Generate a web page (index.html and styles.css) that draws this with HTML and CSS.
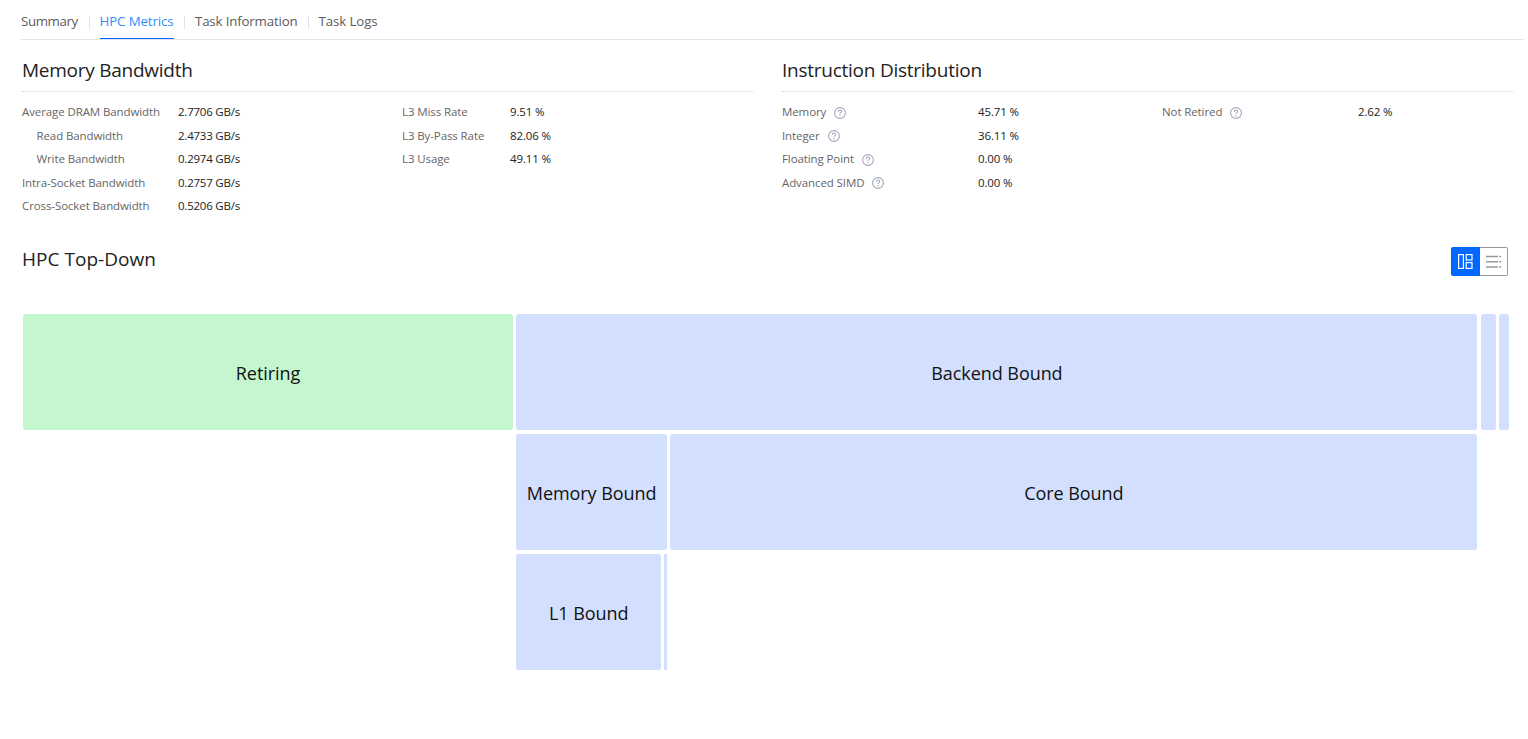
FILE: index.html
```html
<!DOCTYPE html>
<html lang="en">
<head>
<meta charset="utf-8">
<title>HPC Metrics</title>
<link rel="stylesheet" href="styles.css">
</head>
<body>
<svg class="defs" width="0" height="0" aria-hidden="true">
  <symbol id="help" viewBox="0 0 12 12">
    <circle cx="6" cy="6" r="5.4" fill="none" stroke="#a4a8bb" stroke-width="1.1"/>
    <path d="M4.3 4.8C4.3 3.6 5 3 6 3s1.7.6 1.7 1.5C7.7 5.600 6 5.700 6 7.100" fill="none" stroke="#a4a8bb" stroke-width="1.1"/>
    <path d="M5.400 8h1.200v1.200H5.400z" fill="#a4a8bb"/>
  </symbol>
</svg>
<nav class="tabs">
  <a class="tab t1">Summary</a>
  <a class="tab t2 active">HPC Metrics</a>
  <a class="tab t3">Task Information</a>
  <a class="tab t4">Task Logs</a>
</nav>
<main>
  <div class="panels">
    <section class="panel">
      <h2>Memory Bandwidth</h2>
      <div class="metrics">
        <dl class="bandwidth">
          <dt>Average DRAM Bandwidth</dt><dd>2.7706 GB/s</dd>
          <dt class="sub">Read Bandwidth</dt><dd>2.4733 GB/s</dd>
          <dt class="sub">Write Bandwidth</dt><dd>0.2974 GB/s</dd>
          <dt>Intra-Socket Bandwidth</dt><dd>0.2757 GB/s</dd>
          <dt>Cross-Socket Bandwidth</dt><dd>0.5206 GB/s</dd>
        </dl>
        <dl class="cache">
          <dt>L3 Miss Rate</dt><dd>9.51 %</dd>
          <dt>L3 By-Pass Rate</dt><dd>82.06 %</dd>
          <dt>L3 Usage</dt><dd>49.11 %</dd>
        </dl>
      </div>
    </section>
    <section class="panel">
      <h2>Instruction Distribution</h2>
      <div class="metrics">
        <dl class="instr">
          <dt>Memory<svg class="help"><use href="#help"/></svg></dt><dd>45.71 %</dd>
          <dt>Integer<svg class="help"><use href="#help"/></svg></dt><dd>36.11 %</dd>
          <dt>Floating Point<svg class="help"><use href="#help"/></svg></dt><dd>0.00 %</dd>
          <dt>Advanced SIMD<svg class="help"><use href="#help"/></svg></dt><dd>0.00 %</dd>
        </dl>
        <dl class="instr">
          <dt>Not Retired<svg class="help"><use href="#help"/></svg></dt><dd>2.62 %</dd>
        </dl>
      </div>
    </section>
  </div>
  <section>
    <div class="topdown-head">
      <h2>HPC Top-Down</h2>
      <div class="switch">
        <button class="on" aria-label="Chart view"><svg width="15" height="15" viewBox="0 0 15 15" fill="none" stroke="#fff" stroke-width="1.200"><rect x=".6" y=".6" width="4.800" height="13.800"/><rect x="8.200" y=".6" width="5.800" height="5.400"/><rect x="8.200" y="8.600" width="5.800" height="5.800"/></svg></button>
        <button aria-label="List view"><svg width="16" height="14" viewBox="0 0 16 14" stroke="#999" stroke-width="1.500"><path d="M0 1.500h12M13.200 1.500h2M0 6.800h12M13.200 6.800h2M0 12.100h12M13.200 12.100h2"/></svg></button>
      </div>
    </div>
    <div class="tree">
      <div class="cell good" style="width:490px">Retiring</div>
      <div class="group">
        <div class="cell">Backend Bound</div>
        <div class="row">
          <div class="group">
            <div class="cell" style="width:150.400px">Memory Bound</div>
            <div class="row">
              <div class="cell" style="width:144.700px">L1 Bound</div>
              <div class="cell thin" style="width:2.200px"></div>
            </div>
          </div>
          <div class="cell" style="width:807.300px">Core Bound</div>
        </div>
      </div>
      <div class="cell" style="width:15px"></div>
      <div class="cell" style="width:10px"></div>
    </div>
  </section>
</main>
</body>
</html>
```
FILE: styles.css
```css
* { box-sizing: border-box; }
body { margin: 0; background: #fff; color: #222; font: 12px/23.5px "Open Sans", "Noto Sans", sans-serif; }
.defs { display: block; }
.tabs { display: flex; height: 40px; margin: 0 4px 0 21px; border-bottom: 1px solid #e1e3ec; font-size: 13.3px; color: #5c5c5c; }
.tab { position: relative; height: 39px; line-height: 43px; white-space: nowrap; margin-right: 21.500px; }
.tab + .tab::before { content: ""; position: absolute; left: -11px; top: 16px; width: 1px; height: 13px; background: #dfe1ea; }
.tab.active { color: #2f8dff; border-bottom: 1px solid #0067ff; }
.t1 { width: 57px; letter-spacing: -.4px; }
.t2 { width: 74px; letter-spacing: -.12px; }
.t3 { width: 102px; letter-spacing: -.17px; }
.t4 { letter-spacing: -.1px; }
main { padding: 15px 14px 0 22px; }
.panels { display: grid; grid-template-columns: 732px 732px; gap: 28px; height: 173px; }
h2 { margin: 0; font-size: 19px; font-weight: 400; line-height: 30px; height: 37px; letter-spacing: 0.03px; white-space: nowrap; }
.panel h2 { border-bottom: 1px dotted #d5d5d5; letter-spacing: -.25px; }
.metrics { display: grid; grid-template-columns: 380px 1fr; padding-top: 8px; align-items: start; }
dl { display: grid; margin: 0; grid-auto-rows: 23.500px; }
dt, dd { margin: 0; white-space: nowrap; }
dt { color: #666; font-size: 11.5px; letter-spacing: -.1px; display: flex; align-items: center; }
dd { font-size: 11.5px; letter-spacing: -.13px; }
.sub { padding-left: 14.500px; }
.bandwidth { grid-template-columns: 156px auto; }
.bandwidth dd { letter-spacing: -.22px; }
.cache { grid-template-columns: 108px auto; }
.instr { grid-template-columns: 196px auto; }
.help { width: 12px; height: 12px; margin: 2px 0 0 8px; }
.topdown-head { display: flex; justify-content: space-between; padding-top: 16px; height: 86px; }
.switch { display: flex; margin: 3px 6px 0 0; height: 29px; }
.switch button { width: 28px; height: 29px; padding: 0; border: 1px solid #999; border-left: 0; border-radius: 0 2px 2px 0; background: #fff; display: flex; align-items: center; justify-content: center; }
.switch .on { width: 29px; background: #0067ff; border: 0; border-radius: 2px 0 0 2px; padding-right: 1px; }
.tree { display: flex; gap: 3.400px; align-items: flex-start; padding-left: 1px; color: #111; font-size: 18px; letter-spacing: -.06px; }
.group { display: flex; flex-direction: column; gap: 4px; }
.row { display: flex; gap: 3.400px; align-items: flex-start; }
.cell { height: 116px; flex-shrink: 0; display: flex; align-items: center; justify-content: center; padding-top: 3px; white-space: nowrap; border-radius: 2.500px; background: #d3dfff; }
.good { background: #c4f6cf; }
.thin { border-radius: 1px; }
```
